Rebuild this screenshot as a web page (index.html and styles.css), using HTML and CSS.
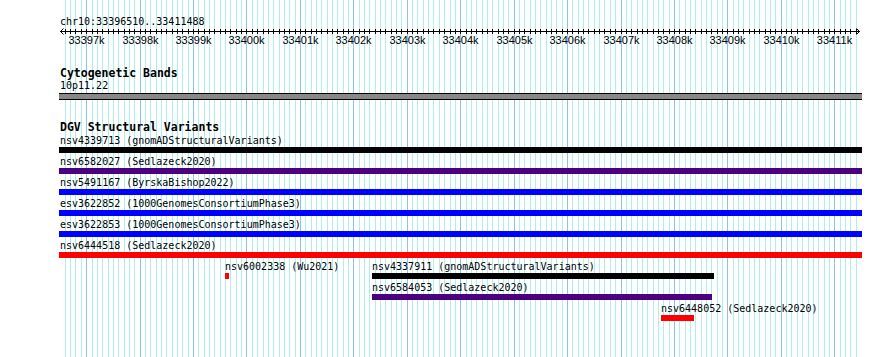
FILE: index.html
```html
<!DOCTYPE html>
<html lang="en">
<head>
    <meta charset="UTF-8">
    <title>chr10:33396510..33411488</title>
    <link rel="stylesheet" href="styles.css">
</head>
<body>
    <div class="track-area">
        <div class="gridlines" id="gridlines"></div>

        <div class="ruler">
            <div class="ruler-loc">chr10:33396510..33411488</div>
            <div class="ruler-scale" id="rulerScale">
                <svg class="ruler-axis" id="rulerAxis" width="803" height="7">
                    <line x1="1" y1="3.5" x2="801" y2="3.5"></line>
                    <polyline points="4.5,0.5 1.5,3.5 4.5,6.5"></polyline>
                    <polyline points="797.5,0.5 800.5,3.5 797.5,6.5"></polyline>
                </svg>
            </div>
        </div>

        <div class="track cyto">
            <div class="track-title">Cytogenetic Bands</div>
            <div class="band-label">10p11.22</div>
            <div class="band"></div>
        </div>

        <div class="track dgv">
            <div class="track-title">DGV Structural Variants</div>
            <div class="features">
                <div class="feature-row">
                    <div class="feature clamped" style="left: 0; width: 803px;">
                        <div class="feature-label">nsv4339713 (gnomADStructuralVariants)</div>
                        <div class="feature-bar black"></div>
                    </div>
                </div>
                <div class="feature-row">
                    <div class="feature clamped" style="left: 0; width: 803px;">
                        <div class="feature-label">nsv6582027 (Sedlazeck2020)</div>
                        <div class="feature-bar purple"></div>
                    </div>
                </div>
                <div class="feature-row">
                    <div class="feature clamped" style="left: 0; width: 803px;">
                        <div class="feature-label">nsv5491167 (ByrskaBishop2022)</div>
                        <div class="feature-bar blue"></div>
                    </div>
                </div>
                <div class="feature-row">
                    <div class="feature clamped" style="left: 0; width: 803px;">
                        <div class="feature-label">esv3622852 (1000GenomesConsortiumPhase3)</div>
                        <div class="feature-bar blue"></div>
                    </div>
                </div>
                <div class="feature-row">
                    <div class="feature clamped" style="left: 0; width: 803px;">
                        <div class="feature-label">esv3622853 (1000GenomesConsortiumPhase3)</div>
                        <div class="feature-bar blue"></div>
                    </div>
                </div>
                <div class="feature-row">
                    <div class="feature clamped" style="left: 0; width: 803px;">
                        <div class="feature-label">nsv6444518 (Sedlazeck2020)</div>
                        <div class="feature-bar red"></div>
                    </div>
                </div>
                <div class="feature-row">
                    <div class="feature" style="left: 166px; width: 4px;">
                        <div class="feature-label">nsv6002338 (Wu2021)</div>
                        <div class="feature-bar red"></div>
                    </div>
                    <div class="feature" style="left: 313px; width: 342px;">
                        <div class="feature-label">nsv4337911 (gnomADStructuralVariants)</div>
                        <div class="feature-bar black"></div>
                    </div>
                </div>
                <div class="feature-row">
                    <div class="feature" style="left: 313px; width: 340px;">
                        <div class="feature-label">nsv6584053 (Sedlazeck2020)</div>
                        <div class="feature-bar purple"></div>
                    </div>
                </div>
                <div class="feature-row">
                    <div class="feature" style="left: 602px; width: 33px;">
                        <div class="feature-label">nsv6448052 (Sedlazeck2020)</div>
                        <div class="feature-bar red"></div>
                    </div>
                </div>
            </div>
        </div>
    </div>

    <script>
        // visible region
        const start = 33396510;
        const end = 33411488;
        const pxPerBp = 0.053432;

        function toX(bp) {
            return Math.floor(1.5 + (bp - start) * pxPerBp);
        }

        const grid = document.getElementById('gridlines');
        const axis = document.getElementById('rulerAxis');
        const scaleBox = document.getElementById('rulerScale');
        const svgNS = 'http://www.w3.org/2000/svg';

        // one gridline + tick every 100bp, labelled every kb
        for (let bp = Math.ceil(start / 100) * 100; bp < end; bp += 100) {
            const x = toX(bp);
            const major = bp % 1000 === 0;

            const line = document.createElement('div');
            line.className = major ? 'gridline major' : 'gridline';
            line.style.left = x + 'px';
            grid.appendChild(line);

            const tick = document.createElementNS(svgNS, 'line');
            tick.setAttribute('x1', x + 0.5);
            tick.setAttribute('x2', x + 0.5);
            tick.setAttribute('y1', 1);
            tick.setAttribute('y2', 6);
            axis.appendChild(tick);

            if (major) {
                const label = document.createElement('div');
                label.className = 'ruler-label';
                label.style.left = (x + 0.5) + 'px';
                label.textContent = (bp / 1000) + 'k';
                scaleBox.appendChild(label);
            }
        }
    </script>
</body>
</html>
```

FILE: styles.css
```css
body { margin: 0; background: #fff; color: #000; overflow: hidden; font-family: "DejaVu Sans Mono", monospace; font-size: 10px; line-height: 12px; }
.track-area { position: relative; z-index: 0; margin-left: 59px; width: 803px; height: 357px; }
.gridlines { position: absolute; top: 0; left: 0; right: 0; bottom: 0; z-index: -1; }
.gridline { position: absolute; top: 0; bottom: 0; width: 1px; background: #aeeeee; }
.gridline.major { background: #88c4ee; }
.ruler-loc { padding-top: 16px; padding-left: 1px; }
.ruler-scale { position: relative; height: 21px; }
.ruler-axis { display: block; stroke: #000; stroke-width: 1; fill: none; }
.ruler-label { position: absolute; top: 6px; transform: translateX(-50%); font-family: "Liberation Sans", Arial, sans-serif; font-size: 11px; line-height: 13px; white-space: nowrap; }
.track-title { padding-left: 1px; font-weight: bold; font-size: 11.5px; line-height: 13px; }
.cyto .track-title { margin-top: 18px; }
.band-label { padding-left: 1px; }
.band { margin-top: 1px; height: 5px; background: #888; border-top: 1px solid #000; border-bottom: 1px solid #000; }
.dgv .track-title { margin-top: 21px; }
.features { margin-top: 1px; }
.feature-row { position: relative; height: 21px; }
.feature { position: absolute; top: 0; }
.feature-label { white-space: nowrap; }
.feature.clamped .feature-label { padding-left: 1px; }
.feature-bar { height: 6px; }
.black { background: #000; }
.purple { background: #4b0082; }
.blue { background: #0000ff; }
.red { background: #ff0000; }
```
